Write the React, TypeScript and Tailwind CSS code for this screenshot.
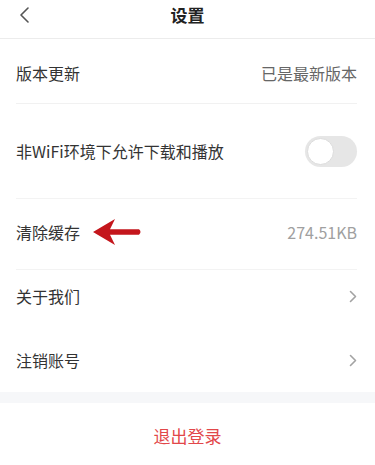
import React from 'react'

function Chevron() {
  return (
    <svg width="8" height="13" viewBox="0 0 8 13" fill="none">
      <path d="M1.5 1.5 L6.5 6.5 L1.5 11.5" stroke="#a3a3a3" strokeWidth="1.6" strokeLinecap="round" strokeLinejoin="round" />
    </svg>
  )
}

function RedArrow() {
  return (
    <svg width="50" height="28" viewBox="0 0 50 28" fill="none">
      <path d="M0 14 L22 1 L17 11.3 L46 11.3 Q49 14 46 16.7 L17 16.7 L22 27 Z" fill="#c4161c" />
    </svg>
  )
}

export default function App() {
  return (
    <div
      className="w-[375px] h-[465px] bg-white overflow-hidden text-[#333]"
      style={{ fontFamily: '"Noto Sans CJK SC", "Noto Sans", sans-serif' }}
    >
      <div className="relative h-[39px] flex items-center justify-center border-b border-[#ececec]">
        <div className="absolute left-[19px] top-[7px]">
          <svg width="11" height="16" viewBox="0 0 11 16" fill="none">
            <path d="M9 1 L2 8 L9 15" stroke="#555" strokeWidth="1.6" strokeLinecap="round" strokeLinejoin="round" />
          </svg>
        </div>
        <span className="text-[17px] font-bold text-[#222] -mt-[9px]">设置</span>
      </div>

      <div className="pl-4 pr-[18px]">
        <div className="h-[65px] flex items-center justify-between border-b border-[#f1f1f1] pt-[3px]">
          <span className="text-[16px]">版本更新</span>
          <span className="text-[16px] text-[#666]">已是最新版本</span>
        </div>
        <div className="h-[95px] flex items-center justify-between border-b border-[#f3f3f3]">
          <span className="text-[16px]">非WiFi环境下允许下载和播放</span>
          <div className="w-[52px] h-[31px] rounded-full bg-[#e6e6e6] p-[2px] flex items-center">
            <div className="w-[27px] h-[27px] rounded-full bg-white border border-[#dcdcdc]" />
          </div>
        </div>
        <div className="h-[71px] flex items-center justify-between border-b border-[#f3f3f3] pb-[4px]">
          <div className="flex items-center gap-[13px]">
            <span className="text-[16px]">清除缓存</span>
            <RedArrow />
          </div>
          <span className="text-[16px] text-[#a0a0a0]">274.51KB</span>
        </div>
        <div className="h-[52px] flex items-center justify-between">
          <span className="text-[16px]">关于我们</span>
          <Chevron />
        </div>
        <div className="h-[70px] flex items-center justify-between pt-[6px]">
          <span className="text-[16px]">注销账号</span>
          <Chevron />
        </div>
      </div>

      <div className="h-[11px] bg-[#f6f7f9]" />

      <div className="h-[66px] flex items-center justify-center">
        <span className="text-[17px] text-[#e2474a]">退出登录</span>
      </div>
    </div>
  )
}
